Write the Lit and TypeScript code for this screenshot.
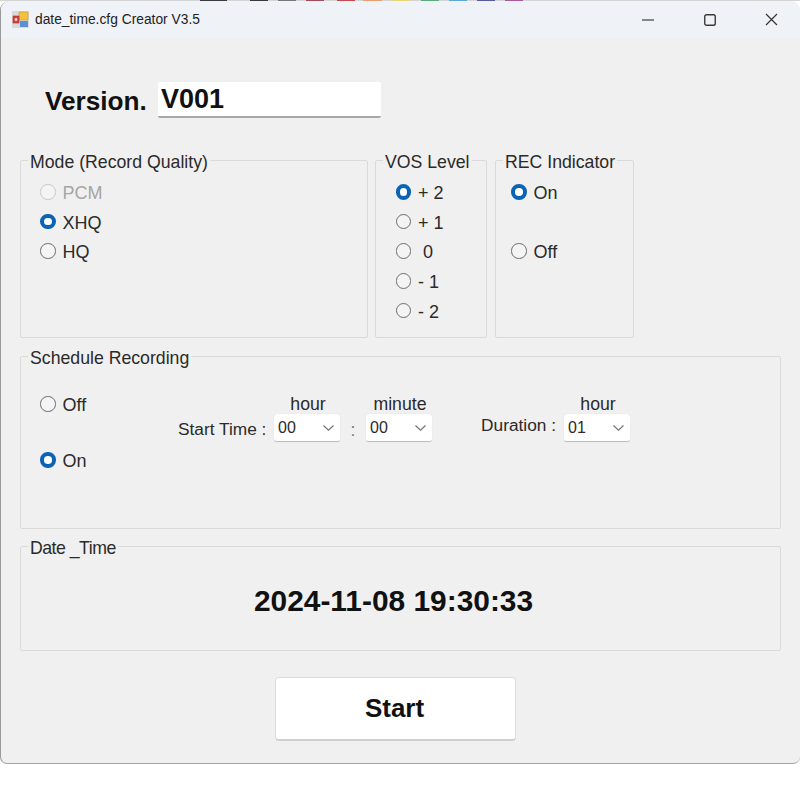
import { LitElement, html, css } from "lit";
import { customElement } from "lit/decorators.js";

const radio = (label: string, cls = "") => html`<div class="radio ${cls}"><span class="dot"></span><span class="txt">${label}</span></div>`;
const select = (v: string) => html`<div class="select"><span>${v}</span><svg width="11" height="6" viewBox="0 0 11 6"><path d="M.5 .5 L5.5 5.2 L10.5 .5" fill="none" stroke="#707070" stroke-width="1.1"/></svg></div>`;
const unit = (label: string, v: string) => html`<div class="col"><span class="unit">${label}</span>${select(v)}</div>`;

// Desktop colours that peek out above the window's top edge: [width, colour]
const strip: [number, string][] = [
  [200, "#d4d4d4"], [27, "#3c3c40"], [23, "#d4d4d4"], [18, "#38383c"], [10, "#d4d4d4"], [18, "#77777a"],
  [10, "#d4d4d4"], [18, "#a04a5c"], [13, "#d4d4d4"], [18, "#c24a50"], [8, "#d4d4d4"], [19, "#e8a070"],
  [10, "#d4d4d4"], [18, "#e6d878"], [11, "#d4d4d4"], [18, "#5caa80"], [10, "#d4d4d4"], [18, "#5aa8d8"],
  [10, "#d4d4d4"], [18, "#5a5aa0"], [10, "#d4d4d4"], [18, "#a85a9a"], [277, "#d4d4d4"],
];

@customElement("app-root")
export class AppRoot extends LitElement {
  static styles = css`
    :host { display: block; width: 800px; height: 800px; background: #fff; font-family: "Liberation Sans", Arial, sans-serif; color: #2a2a2a; font-size: 17.7px; overflow: hidden; }
    * { box-sizing: border-box; }
    .strip { display: flex; height: 1px; }
    .strip span { display: block; height: 1px; }
    .window { height: 763px; background: #f0f0f0; border-bottom: 1px solid #a5a5a5; border-left: 1px solid #9a9a9a; border-radius: 9px 9px 7px 7px; display: flex; flex-direction: column; overflow: hidden; }
    .title { height: 37px; flex: none; background: #eff3f8; display: flex; align-items: center; padding: 0 1px 0 11px; font-size: 13.8px; color: #222; gap: 6px; }
    .title .name { flex: 1; padding-bottom: 1px; }
    .ctl { width: 55.5px; height: 37px; display: flex; align-items: center; justify-content: center; }
    .body { flex: 1; padding: 0 18px 0 19px; display: flex; flex-direction: column; }
    .version { display: flex; align-items: center; margin: 44px 0 0 25px; height: 36px; gap: 11px; font-weight: 700; color: #111; }
    .version .lab { font-size: 26.2px; padding-top: 3px; }
    .input { width: 223px; height: 36px; background: #fff; border-radius: 2px; border-bottom: 2px solid #a8a8a8; font-size: 27px; padding: 1px 3px 0; display: flex; align-items: center; }
    .row { display: flex; margin-top: 31px; }
    fieldset { margin: 0; padding: 0; border: 1px solid #dadada; border-radius: 2px; min-width: 0; }
    legend { margin-left: 7px; padding: 3px 2px 0; line-height: 20px; white-space: nowrap; }
    .mode { width: 348px; height: 189px; }
    .vos { width: 112px; height: 189px; margin-left: 7px; }
    .rec { width: 139px; height: 189px; margin-left: 8px; }
    .inner { display: flex; flex-direction: column; padding: 5px 0 0 19px; }
    .vos .inner { padding-left: 19.5px; }
    .rec .inner { padding-left: 15px; }
    .radio { display: flex; align-items: center; gap: 7px; height: 29.7px; }
    .txt { font-size: 18px; padding-top: 3px; }
    .spacer { height: 29.7px; }
    .dot { width: 15.5px; height: 15.5px; border-radius: 50%; border: 1.6px solid #6c6c6c; background: #f4f4f4; flex: none; }
    .on .dot { border: 4.4px solid #0b63b5; background: #fff; }
    .dis { color: #a6a6a6; }
    .dis .dot { border-color: #c8c8c8; }
    .schedule { height: 184px; margin-top: 7px; width: 761px; }
    .sched-body { display: flex; padding: 21px 0 0 19px; }
    .sched-radios { width: 138px; display: flex; flex-direction: column; gap: 26.3px; }
    .times { display: flex; align-items: flex-end; margin-top: 5px; height: 48px; }
    .col { display: flex; flex-direction: column; align-items: center; }
    .unit { line-height: 20px; height: 20px; padding-left: 2px; }
    .startlab { width: 96px; padding-bottom: 3px; line-height: 20px; font-size: 17.3px; }
    .colon { width: 26px; text-align: center; padding-bottom: 2px; color: #777; line-height: 20px; }
    .durlab { width: 132px; text-align: right; padding: 0 8px 7px 0; line-height: 20px; font-size: 17.3px; }
    .select { width: 66px; height: 28px; background: #fff; border-radius: 3px; border-bottom: 1.5px solid #bdbdbd; box-shadow: 0 0 1px #ccc; display: flex; align-items: center; justify-content: space-between; padding: 0 6px 0 4px; font-size: 16px; }
    .dt { height: 116px; margin-top: 6px; width: 761px; }
    .dt legend { letter-spacing: -0.5px; }
    .dt-body { display: flex; justify-content: center; padding: 25px 14px 0 0; }
    .stamp { font-weight: 700; font-size: 29.9px; color: #111; line-height: 36px; }
    .start { align-self: flex-start; margin: 26px 0 0 255px; width: 241px; height: 64px; background: #fff; border-radius: 4px; border: 1px solid #dcdcdc; border-bottom: 2px solid #cfcfcf; font-weight: 700; font-size: 26px; color: #111; display: flex; align-items: center; justify-content: center; padding-right: 2px; }
  `;

  render() {
    return html`<div class="strip">${strip.map(([w, c]) => html`<span style="width:${w}px;background:${c}"></span>`)}</div>
    <div class="window">
      <div class="title">
        <svg width="17" height="17" viewBox="0 0 17 17">
          <rect x="0" y="0" width="17" height="17" rx="1" fill="#d9d9dc"/>
          <rect x="7" y="1" width="9" height="8" fill="#f2c23e" stroke="#c39a2c" stroke-width=".6"/>
          <rect x="1" y="5" width="6" height="7" fill="#d1403a" stroke="#a83028" stroke-width=".6"/>
          <rect x="2.8" y="7.3" width="2.4" height="2.4" fill="#f5f5f5"/>
          <rect x="8" y="10" width="8" height="6" fill="#5b8fd8"/>
        </svg>
        <span class="name">date_time.cfg Creator V3.5</span>
        <div class="ctl"><svg width="12" height="2" viewBox="0 0 12 2"><path d="M0 1H12" stroke="#1a1a1a" stroke-width="1.1"/></svg></div>
        <div class="ctl"><svg width="12" height="12" viewBox="0 0 12 12"><rect x=".75" y=".75" width="10.5" height="10.5" rx="1.8" fill="none" stroke="#3a3a3a" stroke-width="1.4"/></svg></div>
        <div class="ctl"><svg width="13" height="13" viewBox="0 0 13 13"><path d="M1 1L12 12M12 1L1 12" stroke="#333" stroke-width="1.2"/></svg></div>
      </div>
      <div class="body">
        <div class="version"><span class="lab">Version.</span><div class="input">V001</div></div>
        <div class="row">
          <fieldset class="mode"><legend>Mode (Record Quality)</legend>
            <div class="inner">${radio("PCM", "dis")}${radio("XHQ", "on")}${radio("HQ")}</div>
          </fieldset>
          <fieldset class="vos"><legend>VOS Level</legend>
            <div class="inner">${radio("+ 2", "on")}${radio("+ 1")}${radio("\u00a00")}${radio("- 1")}${radio("- 2")}</div>
          </fieldset>
          <fieldset class="rec"><legend>REC Indicator</legend>
            <div class="inner">${radio("On", "on")}<div class="spacer"></div>${radio("Off")}</div>
          </fieldset>
        </div>
        <fieldset class="schedule"><legend>Schedule Recording</legend>
          <div class="sched-body">
            <div class="sched-radios">${radio("Off")}${radio("On", "on")}</div>
            <div class="times">
              <span class="startlab">Start Time :</span>
              ${unit("hour", "00")}
              <span class="colon">:</span>
              ${unit("minute", "00")}
              <span class="durlab">Duration :</span>
              ${unit("hour", "01")}
            </div>
          </div>
        </fieldset>
        <fieldset class="dt"><legend>Date _Time</legend><div class="dt-body"><div class="stamp">2024-11-08 19:30:33</div></div></fieldset>
        <div class="start">Start</div>
      </div>
    </div>`;
  }
}
